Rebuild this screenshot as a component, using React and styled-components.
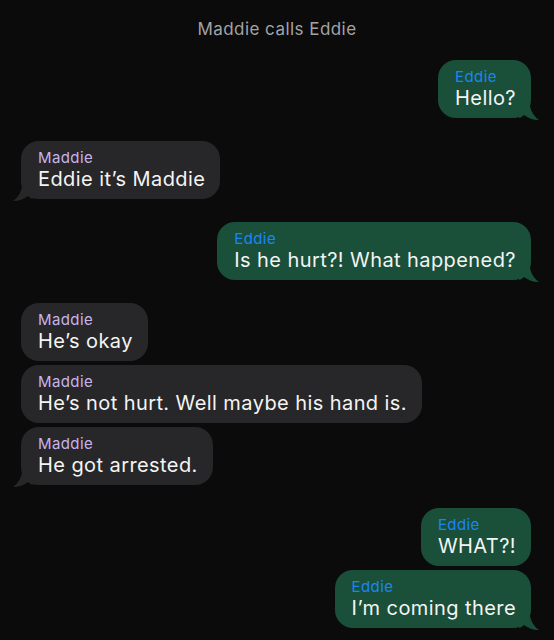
import React from "react";
import styled, { createGlobalStyle } from "styled-components";

const GlobalStyle = createGlobalStyle`
  html, body {
    margin: 0;
    padding: 0;
    background: #0b0b0b;
  }
  body {
    font-family: Inter, "Noto Sans", sans-serif;
  }
`;

const messages = [
  { from: "Eddie", text: "Hello?", tail: true },
  { from: "Maddie", text: "Eddie it\u2019s Maddie", tail: true },
  { from: "Eddie", text: "Is he hurt?! What happened?", tail: true },
  { from: "Maddie", text: "He\u2019s okay" },
  { from: "Maddie", text: "He\u2019s not hurt. Well maybe his hand is." },
  { from: "Maddie", text: "He got arrested.", tail: true },
  { from: "Eddie", text: "WHAT?!" },
  { from: "Eddie", text: "I\u2019m coming there", tail: true },
];

function Tail({ mine }) {
  return (
    <TailSvg mine={mine} width="22" height="24" viewBox="0 0 22 24">
      <path
        d={
          mine
            ? "M2 0 L10 0 C10 10 13 18 20 23 C14 23 9 21 5 18 C3 20 1 21 0 21 Z"
            : "M20 0 L12 0 C12 10 9 18 2 23 C8 23 13 21 17 18 C19 20 21 21 22 21 Z"
        }
      />
    </TailSvg>
  );
}

function App() {
  return (
    <>
      <GlobalStyle />
      <Screen>
        <Title>Maddie calls Eddie</Title>
        <Thread>
          {messages.map((m, i) => {
            const mine = m.from === "Eddie";
            const prev = messages[i - 1];
            const grouped = prev && prev.from === m.from;
            return (
              <Row key={i} mine={mine} grouped={grouped}>
                <Bubble mine={mine}>
                  <Name mine={mine}>{m.from}</Name>
                  <Text>{m.text}</Text>
                  {m.tail && <Tail mine={mine} />}
                </Bubble>
              </Row>
            );
          })}
        </Thread>
      </Screen>
    </>
  );
}

export default App;

const Screen = styled.div`
  width: 554px;
  height: 640px;
  background: #0b0b0b;
  overflow: hidden;
  display: flex;
  flex-direction: column;
`;

const Title = styled.div`
  text-align: center;
  color: #a3a3a6;
  font-size: 17px;
  letter-spacing: 0.45px;
  line-height: 20px;
  padding-top: 19px;
`;

const Thread = styled.div`
  display: flex;
  flex-direction: column;
  padding: 21px 23px 0 21px;
`;

const Row = styled.div`
  display: flex;
  justify-content: ${(p) => (p.mine ? "flex-end" : "flex-start")};
  margin-top: ${(p) => (p.grouped ? "4px" : "23px")};
  &:first-child {
    margin-top: 0;
  }
`;

const Bubble = styled.div`
  position: relative;
  background: ${(p) => (p.mine ? "#1a4f3a" : "#272729")};
  border-radius: 18px;
  padding: 7px 15px 8px 17px;
  display: flex;
  flex-direction: column;
`;

const Name = styled.div`
  font-size: 15px;
  letter-spacing: 0.4px;
  line-height: 19px;
  color: ${(p) => (p.mine ? "#1a86f5" : "#c6b4ee")};
`;

const Text = styled.div`
  font-size: 20px;
  letter-spacing: 0.42px;
  line-height: 24px;
  color: #f4f4f4;
  white-space: nowrap;
`;

const TailSvg = styled.svg`
  position: absolute;
  bottom: -3px;
  ${(p) => (p.mine ? "right: -10px;" : "left: -10px;")}
  path {
    fill: ${(p) => (p.mine ? "#1a4f3a" : "#272729")};
  }
`;
